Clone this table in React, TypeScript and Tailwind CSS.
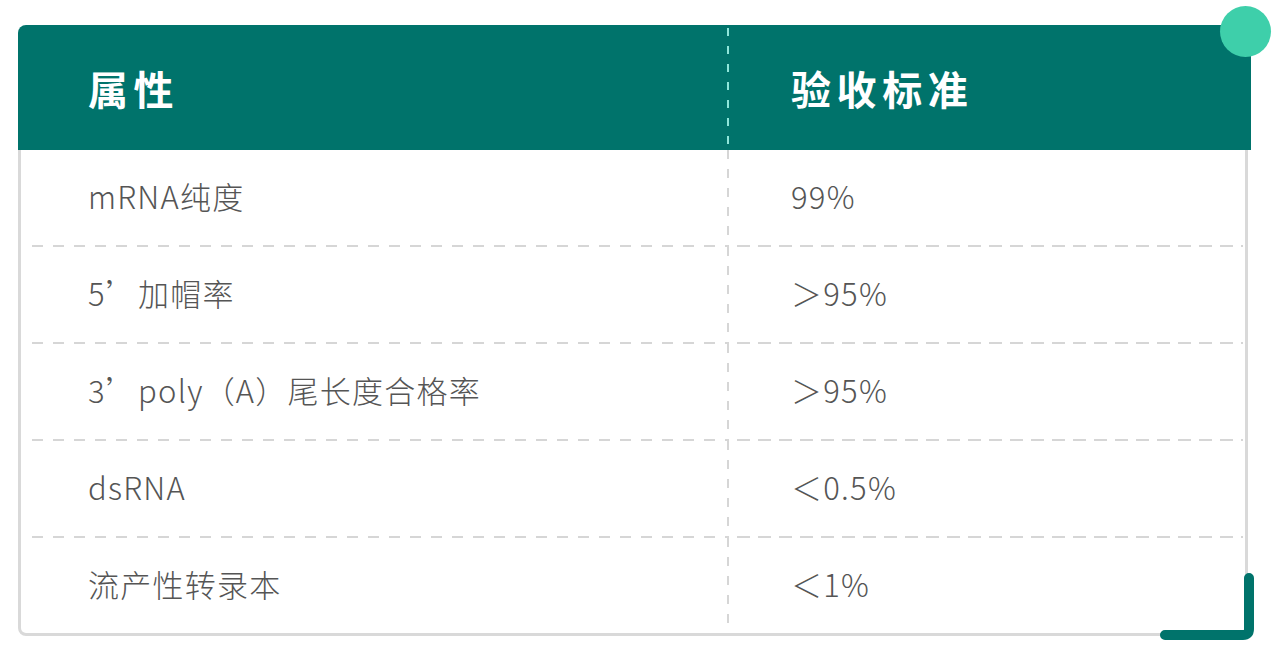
import React from 'react';

const rows = [
    { attr: 'mRNA纯度', std: '99%' },
    { attr: '5’加帽率', std: '＞95%' },
    { attr: '3’poly（A）尾长度合格率', std: '＞95%' },
    { attr: 'dsRNA', std: '＜0.5%' },
    { attr: '流产性转录本', std: '＜1%' },
];

const font = { fontFamily: '"Noto Sans CJK SC", "Noto Sans", sans-serif' };

const VDash = ({ light }: { light?: boolean }) => (
    <div
        className={
            light
                ? 'w-[2px] self-stretch bg-[linear-gradient(to_bottom,#8fe6da_8px,transparent_8px)] bg-[length:2px_18px]'
                : 'w-[2px] self-stretch bg-[linear-gradient(to_bottom,#d6d6d6_9px,transparent_9px)] bg-[length:2px_19px]'
        }
    />
);

export default function App() {
    return (
        <div className="w-[1280px] h-[666px] bg-white pt-[25px] pl-[18px]" style={font}>
            <div className="relative w-[1233px]">
                {/* header */}
                <div className="flex h-[125px] bg-[#00736b] rounded-tl-lg pt-[3px]">
                    <div className="w-[709px] flex items-center pl-[70px] pb-[2px] text-white text-[40px] font-bold tracking-[0.14em]">
                        属性
                    </div>
                    <VDash light />
                    <div className="flex-1 flex items-center pl-[62px] pb-[2px] text-white text-[40px] font-bold tracking-[0.14em]">
                        验收标准
                    </div>
                </div>

                {/* body */}
                <div className="w-[1230px] border-x-[3px] border-b-[3px] border-[#d9d9d9] rounded-b-lg">
                    {rows.map((r, i) => (
                        <div key={i}>
                            <div className="flex h-[95px]">
                                <div className="w-[706px] flex items-center pl-[67px] pb-[3px] text-[31px] font-light text-[#555] tracking-[0.04em]">
                                    {r.attr}
                                </div>
                                <VDash />
                                <div className="flex-1 flex items-center pl-[62px] pb-[3px] text-[31px] font-light text-[#555] tracking-[0.04em]">
                                    {r.std}
                                </div>
                            </div>
                            {i < rows.length - 1 && (
                                <div className="flex h-[2px]">
                                    <div className="w-[706px] pl-[11px]">
                                        <div className="h-[2px] bg-[linear-gradient(to_right,#d6d6d6_11px,transparent_11px)] bg-[length:21px_2px]" />
                                    </div>
                                    <div className="w-[2px] h-[2px] bg-[#d6d6d6]" />
                                    <div className="flex-1 pr-[2px]">
                                        <div className="h-[2px] bg-[linear-gradient(to_right,transparent_8px,#d6d6d6_8px)] bg-[length:21px_2px]" />
                                    </div>
                                </div>
                            )}
                        </div>
                    ))}
                </div>

                {/* decorative circle */}
                <div className="absolute left-[1202px] top-[-19px] w-[51px] h-[51px] rounded-full bg-[#3ecfaa]" />

                {/* bottom-right corner accent */}
                <svg className="absolute left-[1137px] top-[543px]" width="104" height="77" viewBox="0 0 104 77">
                    <path d="M94 10 V61 Q94 67 88 67 H10" fill="none" stroke="#00736b" strokeWidth="10" strokeLinecap="round" strokeLinejoin="round" />
                </svg>
            </div>
        </div>
    );
}
